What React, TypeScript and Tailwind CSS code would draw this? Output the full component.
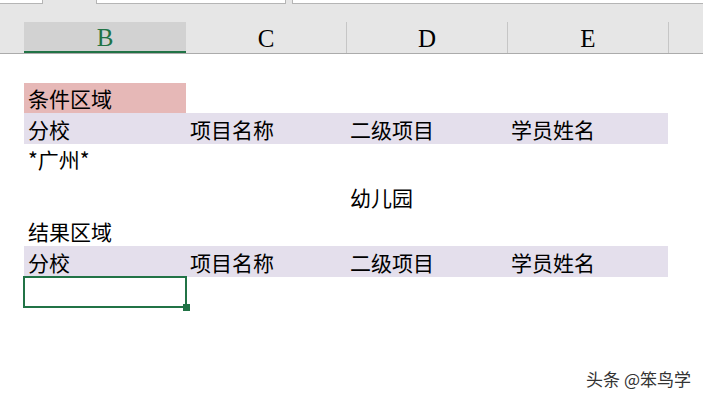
const cjk = { fontFamily: '"Noto Sans CJK SC", "Noto Sans", sans-serif' };

const headers = ["B", "C", "D", "E"];
const colW = ["w-[162px]", "w-[160px]", "w-[161px]", "w-[161px]"];
const fieldNames = ["分校", "项目名称", "二级项目", "学员姓名"];
const lavender = ["bg-[#e4dfec]", "bg-[#e4dfec]", "bg-[#e4dfec]", "bg-[#e4dfec]"];

// one spreadsheet row: A column gutter + B..E cells
const Row = ({
  h,
  cells,
  bg = [],
}: {
  h: string;
  cells: (string | null)[];
  bg?: string[];
}) => (
  <div className={`flex ${h}`}>
    <div className="w-[24px] shrink-0" />
    {cells.map((c, i) => (
      <div
        key={i}
        className={`${colW[i]} shrink-0 flex items-end pl-[4px] pb-[2px] text-[21px] leading-[26px] text-black ${bg[i] || ""}`}
      >
        {c}
      </div>
    ))}
  </div>
);

export default function App() {
  return (
    <div className="w-[703px] h-[398px] bg-white relative overflow-hidden" style={cjk}>
      {/* tab strip */}
      <div className="flex h-[4px] bg-[#e6e6e6]">
        <div className="w-[43px] bg-white border-r border-b border-[#b5b5b5]" />
        <div className="w-[53px]" />
        <div className="w-[190px] bg-white border-x border-b border-[#b5b5b5]" />
        <div className="w-[6px]" />
        <div className="flex-1 bg-white border-l border-b border-[#b5b5b5]" />
      </div>

      {/* column headers */}
      <div className="h-[50px] bg-[#e6e6e6] border-b border-[#ababab] flex items-end">
        <div className="w-[24px] shrink-0" />
        {headers.map((l, i) => (
          <div
            key={l}
            className={`${colW[i]} ${i === 0 ? "bg-[#d2d2d2] border-b-2 border-[#217346] text-[#217346]" : i === 1 ? "text-black" : "border-l border-[#c6c6c6] text-black"} h-[31px] shrink-0 flex items-center justify-center text-[25px] leading-none pt-[2px]`}
            style={{ fontFamily: '"Liberation Serif", serif' }}
          >
            {l}
          </div>
        ))}
        <div className="h-[31px] border-l border-[#c6c6c6] flex-1" />
      </div>

      {/* sheet body */}
      <div className="pt-[29px]">
        <Row h="h-[30px]" cells={["条件区域", null, null, null]} bg={["bg-[#e6b8b7]"]} />
        <Row h="h-[31px]" cells={fieldNames} bg={lavender} />
        <Row h="h-[30px]" cells={["*广州*", null, null, null]} />
        <Row h="h-[38px]" cells={[null, null, "幼儿园", null]} />
        <Row h="h-[34px]" cells={["结果区域", null, null, null]} />
        <Row h="h-[31px]" cells={fieldNames} bg={lavender} />
        <div className="flex h-[31px]">
          <div className="w-[23px] shrink-0" />
          <div className="w-[164px] h-[32px] -mt-[1px] border-2 border-[#217346] relative">
            <div className="absolute -right-[5px] -bottom-[5px] w-[7px] h-[7px] bg-[#217346]" />
          </div>
        </div>
      </div>

      {/* watermark */}
      <div
        className="absolute right-[12px] bottom-[11px] text-[17px] leading-none text-[#333333]"
        style={{ textShadow: "0 0 2px #fff" }}
      >
        头条 @笨鸟学
      </div>
    </div>
  );
}
